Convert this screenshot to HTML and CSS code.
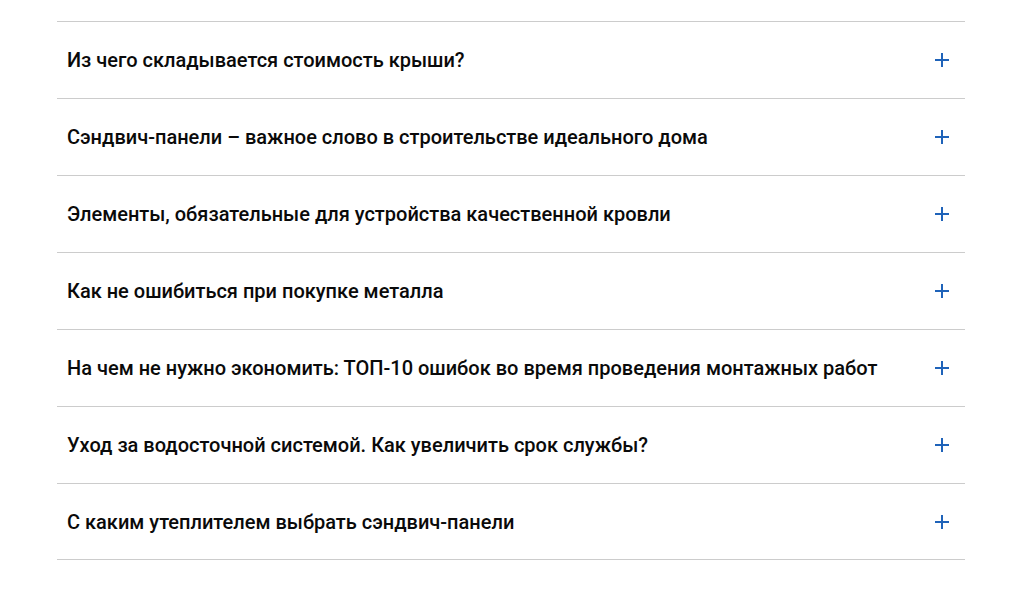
FILE: index.html
```html
<!DOCTYPE html>
<html lang="ru">
<head>
<meta charset="utf-8">
<link rel="stylesheet" href="styles.css">
</head>
<body>
<div class="faq">
  <div class="item"><span class="q">Из чего складывается стоимость крыши?</span><span class="plus"></span></div>
  <div class="item"><span class="q">Сэндвич-панели – важное слово в строительстве идеального дома</span><span class="plus"></span></div>
  <div class="item"><span class="q">Элементы, обязательные для устройства качественной кровли</span><span class="plus"></span></div>
  <div class="item"><span class="q">Как не ошибиться при покупке металла</span><span class="plus"></span></div>
  <div class="item"><span class="q">На чем не нужно экономить: ТОП-10 ошибок во время проведения монтажных работ</span><span class="plus"></span></div>
  <div class="item"><span class="q">Уход за водосточной системой. Как увеличить срок службы?</span><span class="plus"></span></div>
  <div class="item"><span class="q">С каким утеплителем выбрать сэндвич-панели</span><span class="plus"></span></div>
</div>
</body>
</html>
```
FILE: styles.css
```css
html, body {
  margin: 0;
  padding: 0;
  background: #fff;
}
body {
  font-family: Roboto, "Liberation Sans", sans-serif;
}
.faq {
  margin: 21px 0 0 57px;
  width: 908px;
  border-top: 1px solid #cccccc;
}
.item {
  height: 76px;
  border-bottom: 1px solid #cccccc;
  display: flex;
  align-items: center;
  justify-content: space-between;
  padding: 0 16px 0 10px;
}
.item:last-child {
  height: 75px;
}
.q {
  font-size: 20px;
  font-weight: 500;
  color: #0a0a0a;
  line-height: 24px;
}
.plus {
  position: relative;
  width: 14px;
  height: 14px;
  flex: none;
}
.plus::before, .plus::after {
  content: "";
  position: absolute;
  background: #1f63b9;
}
.plus::before {
  left: 0;
  top: 6px;
  width: 14px;
  height: 2px;
}
.plus::after {
  left: 6px;
  top: 0;
  width: 2px;
  height: 14px;
}
```
